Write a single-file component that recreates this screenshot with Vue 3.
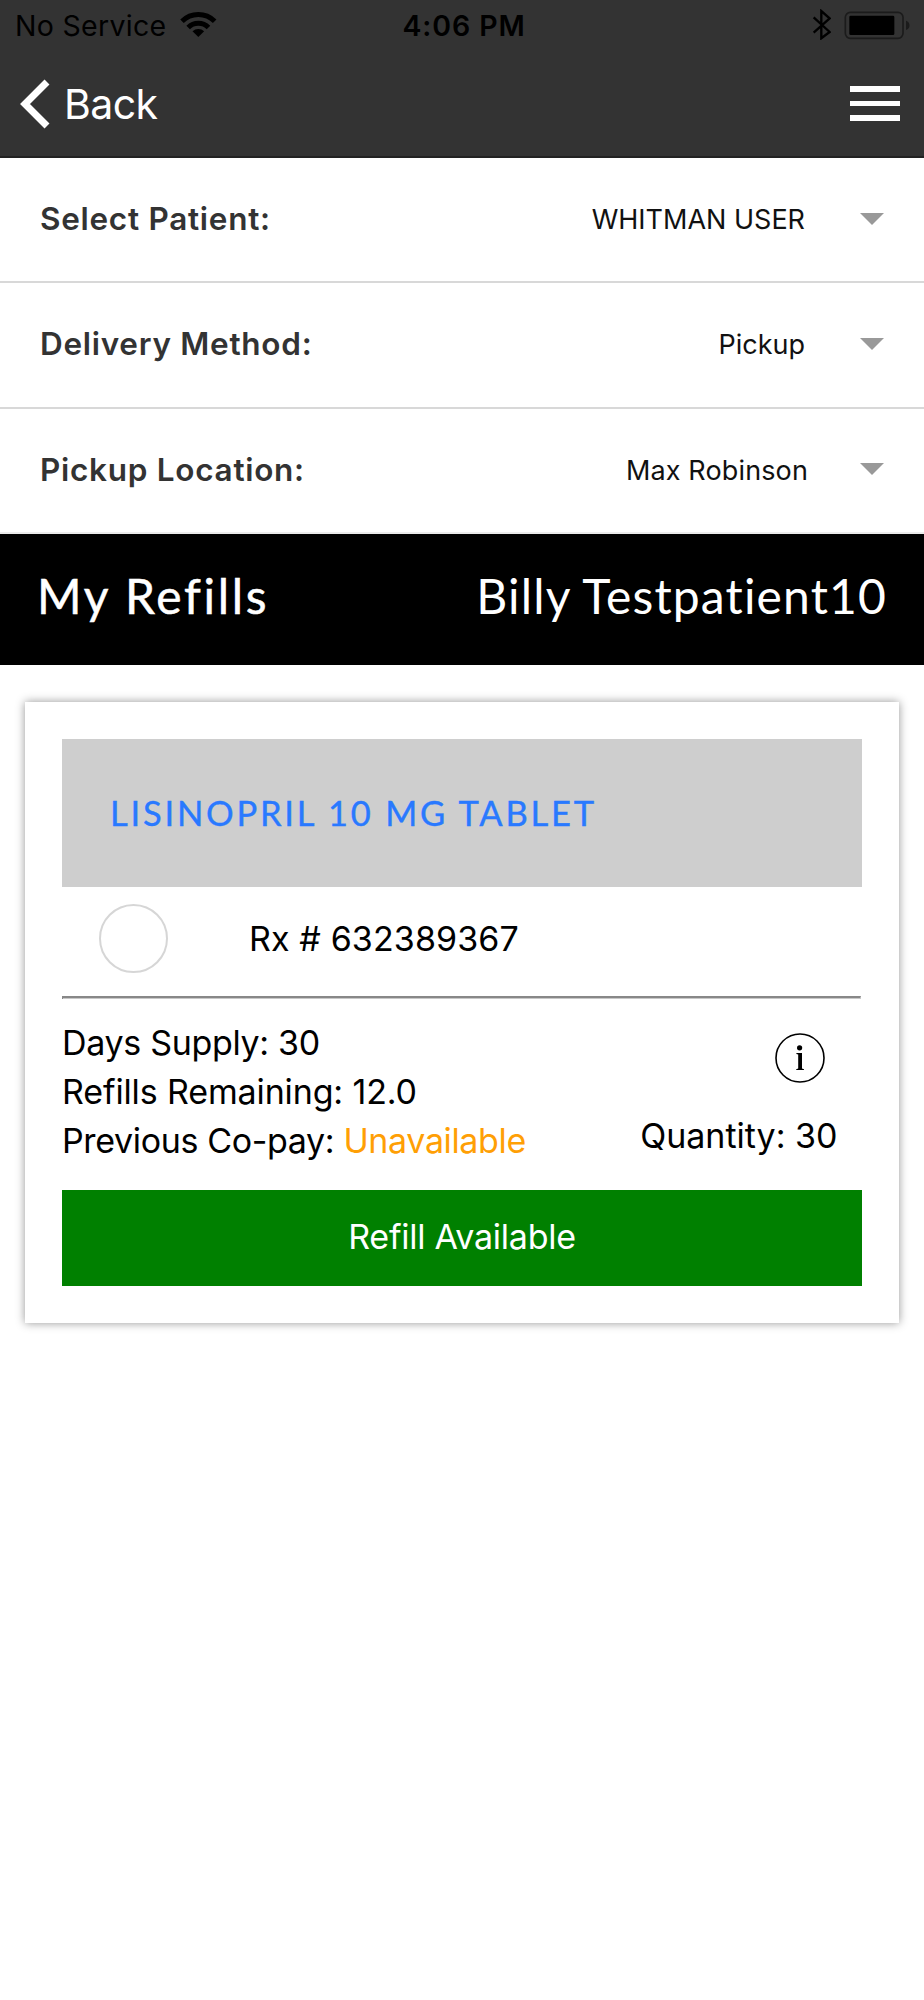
<script setup>
import { ref } from 'vue'

const options = ref([
  { key: 'patient', label: 'Select Patient:', value: 'WHITMAN USER' },
  { key: 'delivery', label: 'Delivery Method:', value: 'Pickup' },
  { key: 'location', label: 'Pickup Location:', value: 'Max Robinson' },
])

const patientName = ref('Billy Testpatient10')

const refills = ref([
  {
    name: 'LISINOPRIL 10 MG TABLET',
    rxNumber: '632389367',
    daysSupply: 30,
    remaining: '12.0',
    copay: 'Unavailable',
    quantity: 30,
    status: 'Refill Available',
    selected: false,
  },
])

function toggleRefill(item) {
  item.selected = !item.selected
}
</script>

<template>
  <div class="page">
    <header class="top-bar">
      <div class="status-bar">
        <div class="status-left">
          <span class="carrier">No Service</span>
          <svg class="wifi" viewBox="0 0 111 81">
            <g fill="none" stroke="#000" stroke-width="15">
              <path d="M6 31A69.5 69.5 0 0 1 104 31" />
              <path d="M24.5 49.5A43 43 0 0 1 85.5 49.5" />
            </g>
            <path d="M55 78L37.5 61A26 26 0 0 1 72.5 61Z" />
          </svg>
        </div>
        <span class="clock">4:06 PM</span>
        <div class="status-right">
          <svg class="bluetooth" viewBox="0 0 58 94">
            <path d="M5 25L53 69L28 88V6L53 28L5 71" fill="none" stroke="#000" stroke-width="7" />
          </svg>
          <svg class="battery" viewBox="0 0 200 86">
            <rect x="4" y="4" width="173" height="78" rx="15" fill="none" stroke="#1b1b1b" stroke-width="5" />
            <rect x="16" y="14" width="135" height="58" rx="4" />
            <path d="M186 29C200 33 200 53 186 57Z" fill="#1b1b1b" />
          </svg>
        </div>
      </div>

      <nav class="nav-bar">
        <a class="back">
          <svg class="chevron" viewBox="0 0 30 50">
            <path d="M27 3L5 25L27 47" fill="none" stroke="#fff" stroke-width="7" />
          </svg>
          <span>Back</span>
        </a>
        <div class="menu">
          <i></i>
          <i></i>
          <i></i>
        </div>
      </nav>
    </header>

    <section class="options">
      <div v-for="item in options" :key="item.key" class="option-row">
        <span class="option-label">{{ item.label }}</span>
        <span class="option-value" :class="item.key">{{ item.value }}</span>
        <i class="caret"></i>
      </div>
    </section>

    <section class="heading">
      <h1>My Refills</h1>
      <span class="patient-name">{{ patientName }}</span>
    </section>

    <article v-for="item in refills" :key="item.rxNumber" class="card">
      <h2 class="drug-name">{{ item.name }}</h2>

      <div class="rx-row">
        <span class="radio" :class="{ checked: item.selected }" @click="toggleRefill(item)"></span>
        <span class="rx-number">Rx # {{ item.rxNumber }}</span>
      </div>

      <div class="divider"></div>

      <div class="details">
        <div class="details-left">
          <p class="supply">Days Supply: {{ item.daysSupply }}</p>
          <p class="remaining">Refills Remaining: {{ item.remaining }}</p>
          <p class="copay">Previous Co-pay: <span>{{ item.copay }}</span></p>
        </div>
        <div class="details-right">
          <svg class="info" viewBox="0 0 50 50">
            <circle cx="25" cy="25" r="24" fill="none" stroke="#000" stroke-width="1.6" />
            <circle cx="24.6" cy="14.8" r="2.6" />
            <path d="M21.4 20H27V35.5L29 36.2V37H21.2V36.2L23.2 35.5V21.5L21.4 21Z" />
          </svg>
          <p>Quantity: {{ item.quantity }}</p>
        </div>
      </div>

      <button class="refill-btn" type="button">{{ item.status }}</button>
    </article>
  </div>
</template>

<style scoped>
.page {
  min-height: 2000px;
  background: #fff;
  color: #000;
  font-family: Inter, 'Liberation Sans', sans-serif;
}

.top-bar {
  height: 158px;
  box-sizing: border-box;
  background: #333;
  border-bottom: 2px solid #222;
}

.status-bar {
  height: 51px;
  display: grid;
  grid-template-columns: 1fr auto 1fr;
  align-items: center;
  padding: 0 13px 0 15px;
  font-size: 28.5px;
}

.status-left,
.status-right {
  display: flex;
  align-items: center;
}

.carrier {
  letter-spacing: 0.29px;
}

.wifi {
  width: 37px;
  height: 27px;
  margin-left: 14px;
  margin-top: -2px;
}

.clock {
  padding-left: 2px;
  font-weight: 600;
  letter-spacing: 0.89px;
}

.status-right {
  justify-content: flex-end;
}

.bluetooth {
  width: 19.3px;
  height: 31.3px;
  margin-right: 13.3px;
  margin-top: -2px;
}

.battery {
  width: 66.7px;
  height: 28.7px;
}

.nav-bar {
  height: 105px;
  display: flex;
  align-items: center;
  justify-content: space-between;
  padding: 0 24.5px 0 20px;
}

.back {
  display: flex;
  align-items: center;
  color: #fff;
  font-size: 41px;
  letter-spacing: -0.6px;
}

.chevron {
  width: 30px;
  height: 50px;
  margin-right: 14px;
}

.menu {
  display: flex;
  flex-direction: column;
  gap: 9px;
  width: 50px;
}

.menu i {
  height: 5.7px;
  background: #fff;
}

.options {
  height: 376px;
  display: grid;
  grid-template-rows: repeat(3, 1fr);
}

.option-row {
  box-sizing: border-box;
  display: flex;
  align-items: center;
  padding: 0 40px 2px 40px;
  border-bottom: 2px solid #d8d8d8;
}

.option-row:last-child {
  border-bottom-color: #ececec;
}

.option-label {
  flex: 1;
  color: #333;
  font-size: 31.5px;
  font-weight: 600;
  letter-spacing: 0.72px;
}

.option-value {
  margin-right: 55px;
  padding-top: 2px;
  color: #111;
  font-size: 27px;
}

.option-value.location {
  margin-right: 52px;
  letter-spacing: 0.13px;
}

.caret {
  border: 12px solid transparent;
  border-top-color: #999;
  border-bottom-width: 0;
}

.heading {
  height: 131px;
  box-sizing: border-box;
  display: flex;
  align-items: center;
  justify-content: space-between;
  padding: 0 37px 9px 37px;
  background: #000;
  color: #fff;
  font-family: Lato, 'Open Sans', sans-serif;
  font-size: 48px;
}

.heading h1 {
  margin: 0;
  font-size: inherit;
  font-weight: 400;
  letter-spacing: 2.7px;
  -webkit-text-stroke: 0.5px #fff;
}

.patient-name {
  letter-spacing: 1.15px;
}

.card {
  margin: 37px 25px 0;
  padding: 37px;
  background: #fff;
  box-shadow: 0 0 9px rgba(0, 0, 0, 0.42);
  font-size: 34px;
}

.drug-name {
  height: 147.6px;
  margin: 0;
  padding-left: 48px;
  background: #cecece;
  color: #2979ff;
  font-family: Lato, 'Open Sans', sans-serif;
  font-size: 34.5px;
  font-weight: 400;
  line-height: 147px;
  letter-spacing: 2.79px;
  -webkit-text-stroke: 0.4px #2979ff;
}

.rx-row {
  height: 104px;
  display: flex;
  align-items: center;
  margin-bottom: 5px;
}

.radio {
  width: 69px;
  height: 69px;
  box-sizing: border-box;
  margin: 0 81px 0 37px;
  border: 2px solid #d6d6d6;
  border-radius: 50%;
}

.radio.checked {
  background: #008000;
}

.rx-number {
  letter-spacing: 0.11px;
}

.divider {
  height: 1px;
  margin-right: 1px;
  background: #c8c8c8;
  border: 1px solid #ccc;
  border-top: 2px solid #888;
  border-left-color: #888;
  border-bottom: 0;
}

.details {
  display: flex;
  justify-content: space-between;
  margin-top: 19.5px;
  height: 171.9px;
}

.details p {
  margin: 0;
  line-height: 49.1px;
}

.details .supply {
  letter-spacing: -0.32px;
}

.details .remaining {
  letter-spacing: -0.13px;
}

.details .copay {
  letter-spacing: -0.36px;
}

.copay span {
  color: #ff9f05;
}

.details-right {
  display: flex;
  flex-direction: column;
  align-items: flex-end;
  gap: 28px;
  padding: 15px 24.5px 0 0;
}

.info {
  width: 50px;
  height: 50px;
  margin-right: 12.5px;
}

.refill-btn {
  display: block;
  width: 100%;
  height: 96px;
  padding: 0 0 2px;
  border: 0;
  background: #008000;
  color: #fff;
  font: inherit;
  letter-spacing: -0.26px;
}
</style>

<style>
body {
  margin: 0;
  background: #fff;
}
</style>
